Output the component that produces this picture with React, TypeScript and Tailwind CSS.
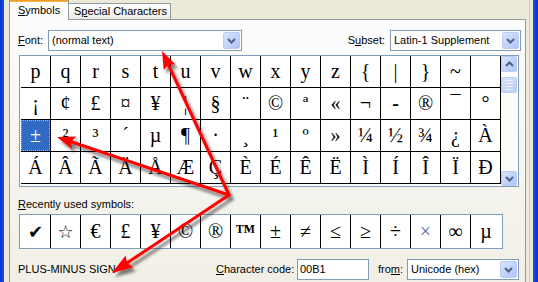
import React from "react";

const rows: string[][] = [
  ["p", "q", "r", "s", "t", "u", "v", "w", "x", "y", "z", "{", "|", "}", "~", ""],
  ["¡", "¢", "£", "¤", "¥", "¦", "§", "¨", "©", "ª", "«", "¬", "-", "®", "¯", "°"],
  ["±", "²", "³", "´", "µ", "¶", "·", "¸", "¹", "º", "»", "¼", "½", "¾", "¿", "À"],
  ["Á", "Â", "Ã", "Ä", "Å", "Æ", "Ç", "È", "É", "Ê", "Ë", "Ì", "Í", "Î", "Ï", "Ð"],
];

const recent: string[] = ["✔", "☆", "€", "£", "¥", "©", "®", "™", "±", "≠", "≤", "≥", "÷", "×", "∞", "µ"];

function Chevron({ up = false }: { up?: boolean }) {
  return (
    <svg width="9" height="6" viewBox="0 0 9 6">
      <path
        d={up ? "M1 5 L4.5 1.5 L8 5" : "M1 1 L4.5 4.5 L8 1"}
        stroke="#4d6185"
        strokeWidth="2"
        fill="none"
      />
    </svg>
  );
}

function DropBtn() {
  return (
    <div className="flex h-[17px] w-[17px] items-center justify-center rounded-[2px] border border-[#bccbf1] bg-gradient-to-br from-[#d8e3fd] to-[#afc4f6]">
      <Chevron />
    </div>
  );
}

function Combo({ className, text }: { className: string; text: string }) {
  return (
    <div className={`flex h-[21px] items-center border border-[#7f9db9] bg-white pl-[3px] pr-px ${className}`}>
      <span className="flex-1 truncate whitespace-nowrap">{text}</span>
      <DropBtn />
    </div>
  );
}

function Arrow({ from, to, hl = 18, hw = 6.5 }: { from: [number, number]; to: [number, number]; hl?: number; hw?: number }) {
  const [x1, y1] = from;
  const [x2, y2] = to;
  const dx = x2 - x1;
  const dy = y2 - y1;
  const L = Math.hypot(dx, dy);
  const ux = dx / L;
  const uy = dy / L;
  const nx = -uy;
  const ny = ux;
  const bx = x2 - ux * hl;
  const by = y2 - uy * hl;
  const pts = `${x2},${y2} ${bx + nx * hw},${by + ny * hw} ${bx + ux * 3},${by + uy * 3} ${bx - nx * hw},${by - ny * hw}`;
  return (
    <g>
      <line x1={x1} y1={y1} x2={bx + ux * 3} y2={by + uy * 3} stroke="#ff0000" strokeWidth={3} strokeLinecap="round" />
      <polygon points={pts} fill="#ff0000" />
    </g>
  );
}

export default function App() {
  const C: [number, number] = [229, 195];
  return (
    <div className="relative flex h-[282px] w-[538px] overflow-hidden bg-[#ece9d8] font-['Liberation_Sans',Arial,sans-serif] text-[11px] leading-none text-black">
      <div className="w-[4px] bg-gradient-to-r from-[#0a2bc9] to-[#1856e6]" />

      <div className="flex w-[522px] flex-col pl-[5px]">
        {/* tabs */}
        <div className="flex h-[19px] items-end">
          <div className="relative z-10 -mb-px flex h-[20px] w-[60px] flex-col border-x border-[#919b9c] bg-[#fcfcfe]">
            <div className="h-[2px] bg-gradient-to-b from-[#e68b2c] to-[#ffc73c]" />
            <div className="flex flex-1 items-center pl-[8px] pb-[1px]">
              <span>
                <u>S</u>ymbols
              </span>
            </div>
          </div>
          <div className="flex h-[16px] w-[102px] items-center border-r border-t border-[#919b9c] bg-gradient-to-b from-white to-[#ecebe6] pl-[5px]">
            <span>
              S<u>p</u>ecial Characters
            </span>
          </div>
        </div>

        {/* panel */}
        <div className="flex flex-1 flex-col border-x border-t border-[#919b9c] bg-gradient-to-b from-[#fcfcfe] to-[#f1efe5]">
          {/* font row */}
          <div className="mt-[10px] flex h-[21px] items-center pl-[8px] pr-[4px]">
            <span className="w-[30px]">
              <u>F</u>ont:
            </span>
            <Combo className="w-[194px]" text="(normal text)" />
            <div className="flex-1" />
            <span className="mr-[5px]">
              S<u>u</u>bset:
            </span>
            <Combo className="w-[131px]" text="Latin-1 Supplement" />
          </div>

          {/* symbol list */}
          <div className="ml-[9px] mt-[4px] flex h-[132px] w-[500px] border border-[#7f9db9] bg-white">
            <div className="ml-px flex flex-col">
              {rows.map((r, ri) => (
                <div key={ri} className="flex">
                  {r.map((ch, ci) => {
                    const sel = ri === 2 && ci === 0;
                    return (
                      <div
                        key={ci}
                        className={`flex h-[32px] w-[30px] items-center justify-center border-b border-r border-black font-['Liberation_Serif','Times_New_Roman',serif] text-[20px] leading-[31px] ${
                          sel ? "bg-[#316ac5] text-white" : ""
                        } ${ch === "-" ? "font-bold" : ""}`}
                      >
                        {sel ? (
                          <div className="flex h-full w-full items-center justify-center border border-dotted border-[#9fbbe8]">
                            {ch}
                          </div>
                        ) : (
                          ch
                        )}
                      </div>
                    );
                  })}
                </div>
              ))}
            </div>
            <div className="flex w-[17px] flex-col bg-[#fbfbf8]">
              <div className="flex h-[16px] w-[16px] items-center justify-center rounded-[2px] border border-[#bccbf1] bg-gradient-to-br from-[#d8e3fd] to-[#afc4f6]">
                <Chevron up />
              </div>
              <div className="h-[5px]" />
              <div className="flex h-[16px] w-[16px] flex-col items-center justify-center gap-[2px] rounded-[2px] border border-[#bccbf1] bg-gradient-to-br from-[#d8e3fd] to-[#b9cbf7]">
                <div className="h-px w-[7px] bg-[#eef3fe]" />
                <div className="h-px w-[7px] bg-[#eef3fe]" />
                <div className="h-px w-[7px] bg-[#eef3fe]" />
                <div className="h-px w-[7px] bg-[#eef3fe]" />
              </div>
              <div className="flex-1" />
              <div className="flex h-[15px] w-[16px] items-center justify-center rounded-[2px] border border-[#bccbf1] bg-gradient-to-br from-[#d8e3fd] to-[#afc4f6]">
                <Chevron />
              </div>
            </div>
          </div>

          {/* recently used */}
          <div className="ml-[8px] mt-[10px] flex h-[14px] items-center">
            <span>
              <u>R</u>ecently used symbols:
            </span>
          </div>
          <div className="ml-[9px] mt-[3px] flex h-[35px] w-[484px] border border-[#7f9db9] bg-white pl-px">
            {recent.map((ch, i) => (
              <div
                key={i}
                className={`flex h-[33px] w-[30px] items-center justify-center ${i < 15 ? "border-r border-black" : ""} ${
                  i < 2
                    ? "font-['DejaVu_Sans',sans-serif] text-[18px]"
                    : "font-['Liberation_Serif','Times_New_Roman',serif] text-[20px]"
                } leading-[33px] ${i === 7 ? "font-bold" : ""} ${i === 13 ? "text-[#5a6fa8]" : ""}`}
              >
                {ch}
              </div>
            ))}
          </div>

          {/* bottom row */}
          <div className="mt-[10px] flex h-[21px] items-center pl-[8px]">
            <span className="w-[198px]">PLUS-MINUS SIGN</span>
            <span className="w-[81px]">
              <u>C</u>haracter code:
            </span>
            <div className="flex h-[21px] w-[72px] items-center border border-[#7f9db9] bg-white pl-[2px]">00B1</div>
            <span className="ml-[9px] w-[29px]">
              fro<u>m</u>:
            </span>
            <Combo className="w-[112px]" text="Unicode (hex)" />
          </div>
        </div>
      </div>

      <div className="w-[7px] pl-[3px]">
        <div className="h-full w-px bg-[#cfccbd]" />
      </div>
      <div className="w-[5px] bg-gradient-to-r from-[#1856e6] to-[#0a2bc9]" />

      {/* annotation arrows */}
      <svg className="pointer-events-none absolute left-0 top-0" width="538" height="282" viewBox="0 0 538 282">
        <defs>
          <filter id="sh" x="-30%" y="-30%" width="160%" height="160%">
            <feDropShadow dx="3" dy="4" stdDeviation="1.6" floodColor="#000" floodOpacity="0.5" />
          </filter>
        </defs>
        <g filter="url(#sh)">
          <Arrow from={C} to={[162, 51]} />
          <Arrow from={C} to={[57, 137]} />
          <Arrow from={C} to={[112, 273]} hl={21} hw={7} />
        </g>
      </svg>
    </div>
  );
}
